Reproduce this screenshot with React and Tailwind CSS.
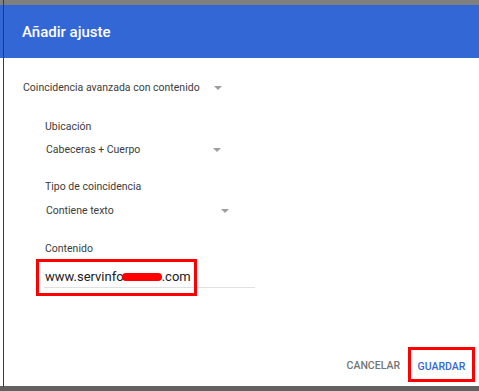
export default function App() {
  const Arrow = () => (
    <span className="block w-0 h-0 border-l-[4px] border-r-[4px] border-t-[4px] border-l-transparent border-r-transparent border-t-[#9e9e9e]"></span>
  );

  return (
    <div className="relative w-[479px] h-[391px] bg-white flex flex-col overflow-hidden" style={{ fontFamily: 'Roboto, "Liberation Sans", sans-serif' }}>
      <div className="h-[5px] bg-[#808080] shrink-0"></div>

      {/* cabecera */}
      <div className="h-[53px] bg-[#3367d6] shrink-0 flex items-center pl-[22px]">
        <h2 className="text-white text-[15px] font-medium leading-none pt-[1px]">Añadir ajuste</h2>
      </div>

      {/* cuerpo */}
      <div className="flex-1 flex flex-col pt-[22px] pl-[23px] text-[10.5px] text-[#3c3c3c] whitespace-nowrap">
        <div className="w-[199px] h-[16px] flex items-center justify-between">
          <span>Coincidencia avanzada con contenido</span>
          <Arrow />
        </div>

        <div className="pl-[22px] flex flex-col">
          <div className="h-[16px] mt-[23px] flex items-center">Ubicación</div>
          <div className="w-[176px] h-[16px] mt-[7px] pl-[1px] flex items-center justify-between">
            <span>Cabeceras + Cuerpo</span>
            <Arrow />
          </div>

          <div className="h-[16px] mt-[21px] flex items-center">Tipo de coincidencia</div>
          <div className="w-[184px] h-[16px] mt-[8px] pl-[1px] flex items-center justify-between">
            <span>Contiene texto</span>
            <Arrow />
          </div>

          <div className="h-[16px] mt-[22px] flex items-center">Contenido</div>
          <div className="relative mt-[10px] -ml-[1px] w-[211px] h-[21px] border-b border-[#e0e0e0] flex items-center pl-[1px] text-[13px] text-[#212121]">
            <span>www.servinfo</span>
            <span className="inline-block w-[40px] h-[8px] bg-[#ff0000] rounded-full -ml-[2px]"></span>
            <span>.com</span>
            <div className="absolute left-[-8px] top-[-8px] w-[161px] h-[37px] border-[3px] border-[#ff0000]"></div>
          </div>
        </div>
      </div>

      {/* botones */}
      <div className="flex justify-end items-center pr-[4px] pb-[4px] shrink-0">
        <button className="text-[10.5px] font-medium text-[#757575] mr-[8px] pt-[3px]">CANCELAR</button>
        <div className="w-[67px] h-[35px] border-[3px] border-[#ff0000] flex items-center justify-center pt-[4px]">
          <button className="text-[10.5px] font-medium text-[#3367d6]">GUARDAR</button>
        </div>
      </div>

      <div className="h-[5px] bg-[#616161] shrink-0"></div>
      <div className="absolute left-[3px] top-0 bottom-[4px] w-px bg-[#3a3a3a]"></div>
    </div>
  );
}
